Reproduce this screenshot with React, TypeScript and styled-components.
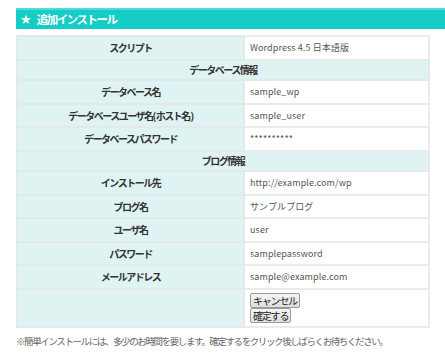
import styled, { createGlobalStyle } from "styled-components";

const GlobalStyle = createGlobalStyle`
    body {
        margin: 0;
        background: #ffffff;
        font-family: "Noto Sans CJK JP", "Noto Sans", sans-serif;
        color: #333333;
    }
`;

const Wrapper = styled.main`
    padding: 8px 0 0 16px;
    width: 429px;
    overflow: hidden;
`;

const Header = styled.h2`
    margin: 0;
    height: 21px;
    box-sizing: border-box;
    display: flex;
    align-items: center;
    gap: 5px;
    padding-left: 4px;
    background-color: #15cdc6;
    border-top: 2px solid #4fdcd6;
    color: #ffffff;
    font-size: 11.5px;
    font-weight: bold;
    letter-spacing: -1.5px;
    line-height: 1;
`;

const Star = styled.span`
    font-size: 13px;
    letter-spacing: 0;
    font-family: "DejaVu Sans", sans-serif;
`;

const Table = styled.table`
    margin-top: 6px;
    width: 414px;
    border-collapse: collapse;
    border: 2px solid #e9ecec;
    font-size: 9px;
    line-height: 13px;
    table-layout: fixed;
`;

const LabelCell = styled.th`
    width: 225px;
    height: 21.5px;
    padding: 0;
    background-color: #dff3f2;
    border: 2px solid #e3e9ea;
    text-align: center;
    font-size: 10px;
    letter-spacing: -1.5px;
    font-weight: bold;
    color: #333333;
`;

const SectionCell = styled.th`
    height: 18.5px;
    padding: 0;
    background-color: #dff3f2;
    border: 2px solid #e3e9ea;
    text-align: center;
    font-size: 10px;
    letter-spacing: -1.5px;
    font-weight: bold;
    color: #333333;
`;

const ValueCell = styled.td`
    padding: 0 0 0 5px;
    background-color: #ffffff;
    border: 2px solid #e9ecec;
    color: #555555;
    letter-spacing: 0.1px;
`;

const ButtonCell = styled(ValueCell)`
    height: 36px;
    padding-top: 0;
    vertical-align: middle;
`;

const ActionButton = styled.button`
    display: block;
    margin: 0;
    padding: 0 2px;
    height: 15px;
    font-family: "Noto Sans CJK JP", sans-serif;
    font-size: 10px;
    letter-spacing: -1.2px;
    line-height: 13px;
    color: #222222;
    background: linear-gradient(#f6f6f6, #dddddd);
    border: 1px solid #9a9a9a;
    border-radius: 2px;
`;

const Note = styled.p`
    margin: 6px 0 0;
    font-size: 9.5px;
    letter-spacing: -1.4px;
    color: #666666;
    white-space: nowrap;
`;

type Row =
    | { kind: "section"; title: string }
    | { kind: "field"; label: string; value: string };

const rows: Row[] = [
    { kind: "field", label: "スクリプト", value: "Wordpress 4.5 日本語版" },
    { kind: "section", title: "データベース情報" },
    { kind: "field", label: "データベース名", value: "sample_wp" },
    { kind: "field", label: "データベースユーザ名( ホスト名 )", value: "sample_user" },
    { kind: "field", label: "データベースパスワード", value: "**********" },
    { kind: "section", title: "ブログ情報" },
    { kind: "field", label: "インストール先", value: "http://example.com/wp" },
    { kind: "field", label: "ブログ名", value: "サンプルブログ" },
    { kind: "field", label: "ユーザ名", value: "user" },
    { kind: "field", label: "パスワード", value: "samplepassword" },
    { kind: "field", label: "メールアドレス", value: "sample@example.com" },
];

function App() {
    return (
        <Wrapper>
            <GlobalStyle />
            <Header>
                <Star>★</Star>
                追加インストール
            </Header>
            <Table>
                <tbody>
                    {rows.map((row, i) =>
                        row.kind === "section" ? (
                            <tr key={i}>
                                <SectionCell colSpan={2}>{row.title}</SectionCell>
                            </tr>
                        ) : (
                            <tr key={i}>
                                <LabelCell>{row.label}</LabelCell>
                                <ValueCell>{row.value}</ValueCell>
                            </tr>
                        )
                    )}
                    <tr>
                        <LabelCell />
                        <ButtonCell>
                            <ActionButton>キャンセル</ActionButton>
                            <ActionButton>確定する</ActionButton>
                        </ButtonCell>
                    </tr>
                </tbody>
            </Table>
            <Note>※簡単インストールには、多少のお時間を要します。確定するをクリック後しばらくお待ちください。</Note>
        </Wrapper>
    );
}

export default App;
